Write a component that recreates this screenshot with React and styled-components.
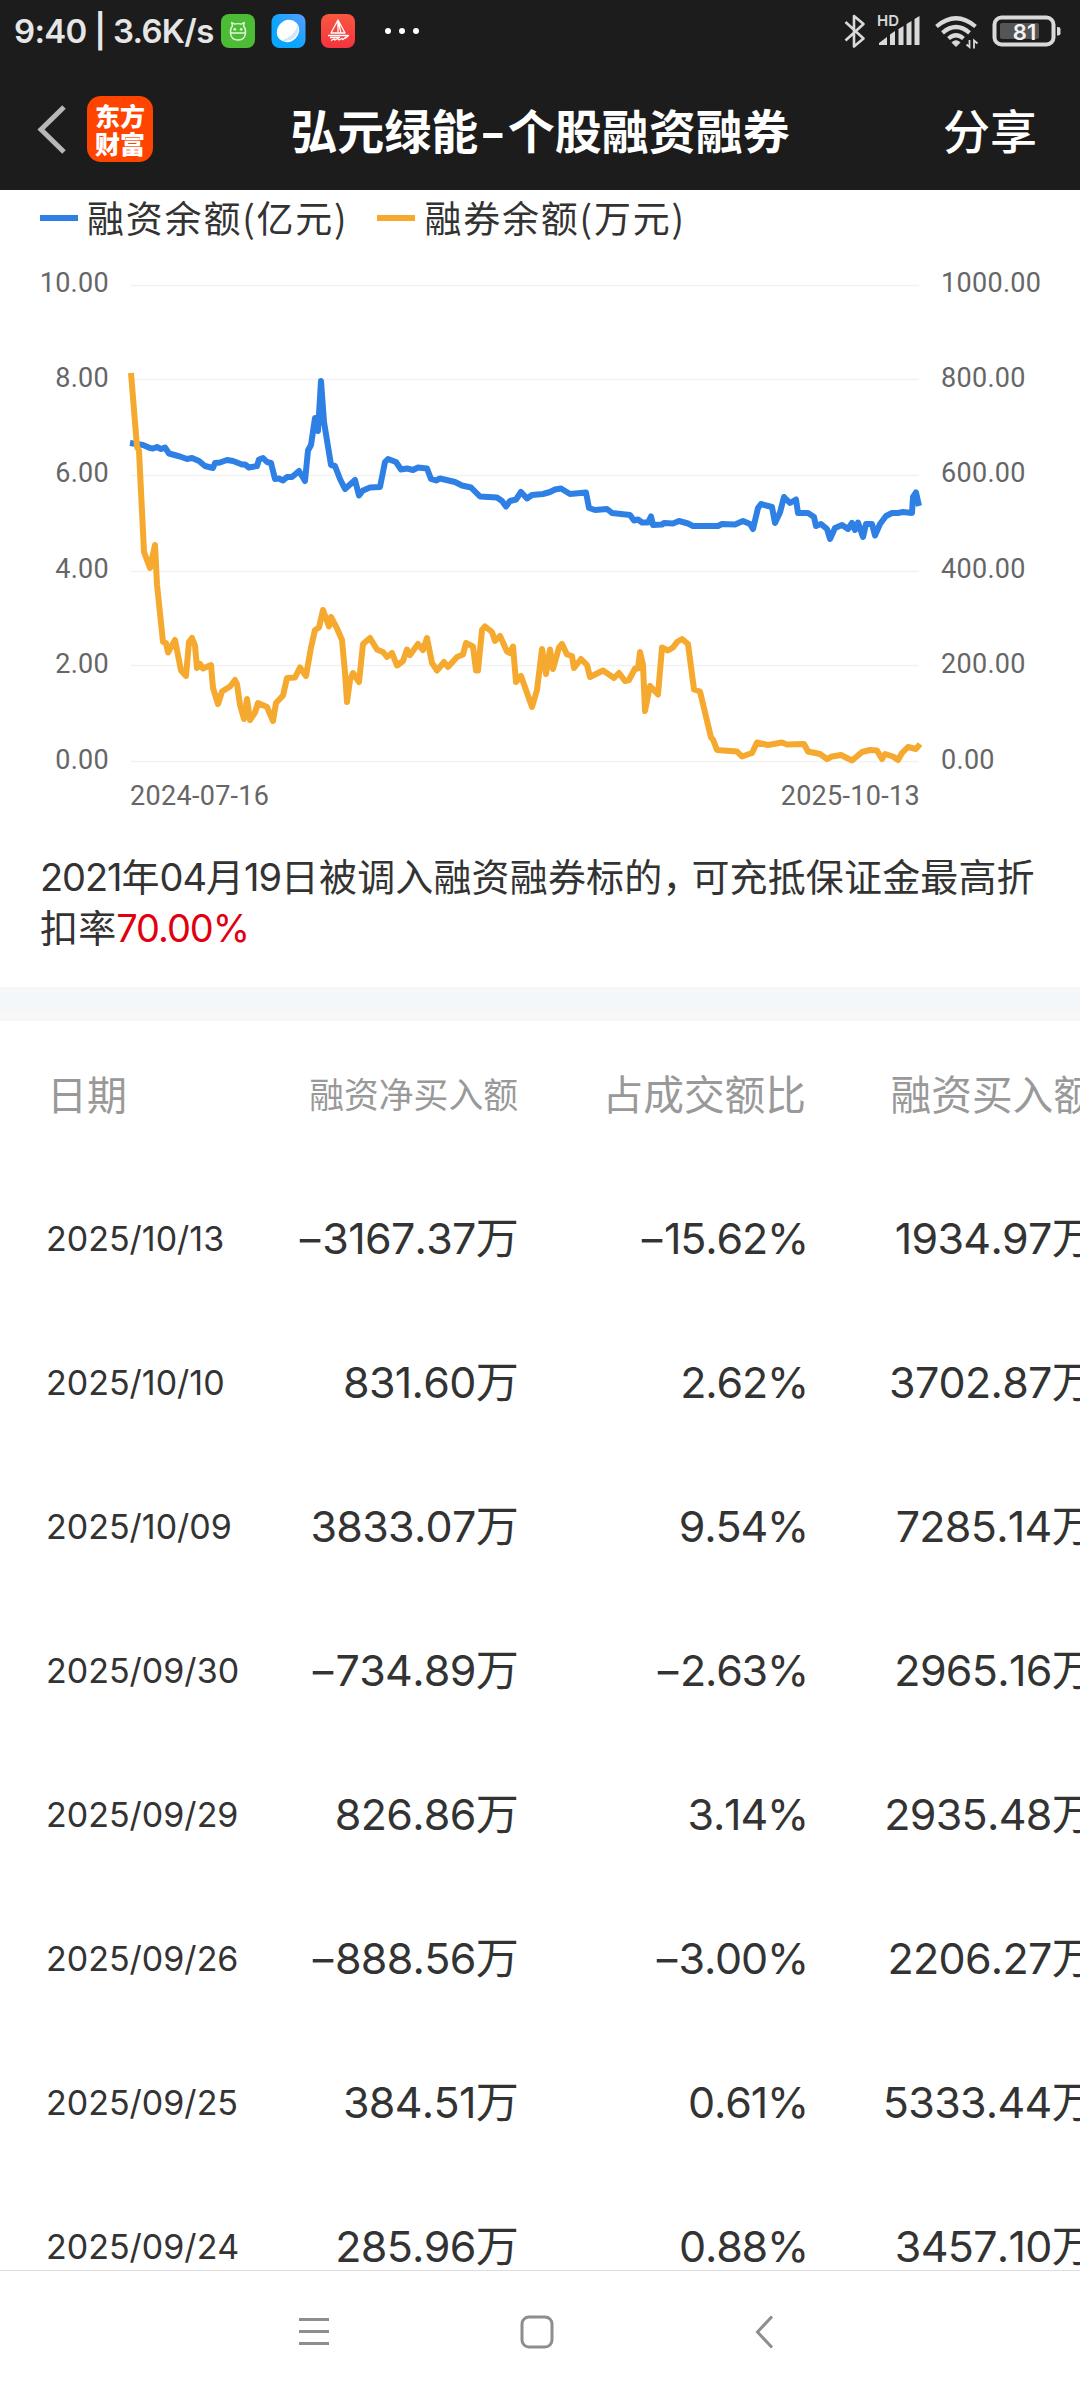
import React from 'react';
import styled, { createGlobalStyle } from 'styled-components';

const CJK = '"Noto Sans CJK SC", sans-serif';
const UI = `Inter, ${CJK}`;

const GlobalStyle = createGlobalStyle`
  * {
    box-sizing: border-box;
  }
  body {
    margin: 0;
    background: #fff;
  }
`;

const Screen = styled.div`
  display: flex;
  flex-direction: column;
  width: 1080px;
  height: 2400px;
  overflow: hidden;
  background: #fff;
  color: #333;
  font-family: ${UI};
`;

const Top = styled.header`
  height: 190px;
  flex: none;
  background: #1c1c1c;
  color: #fff;
`;

const StatusBar = styled.div`
  display: flex;
  align-items: center;
  justify-content: space-between;
  height: 62px;
  padding: 0 19px 0 14px;
`;

const StatusGroup = styled.div`
  display: flex;
  align-items: center;
`;

const Clock = styled.span`
  width: 207px;
  font-size: 33px;
  font-weight: 600;
  line-height: 62px;
  letter-spacing: -0.7px;
  white-space: pre;
  color: #e6e6e6;
`;

const NavBar = styled.nav`
  display: grid;
  grid-template-columns: 290px 1fr 290px;
  align-items: center;
  height: 128px;
  padding-top: 6px;
`;

const NavLeft = styled.div`
  display: flex;
  align-items: center;
  gap: 20px;
  padding-left: 36px;
`;

const Logo = styled.div`
  display: grid;
  grid-template-columns: 25px 25px;
  grid-auto-rows: 28px;
  place-content: center;
  place-items: center;
  width: 66px;
  height: 66px;
  border-radius: 14px;
  background: #ff4400;
  font-family: ${CJK};
  font-size: 25px;
  font-weight: 900;
  line-height: 28px;
`;

const Title = styled.h1`
  margin: 0;
  font-family: ${CJK};
  font-size: 47px;
  font-weight: 700;
  line-height: 68px;
  text-align: center;
  white-space: nowrap;
`;

// The hyphen is drawn as wide as a digit
const Dash = styled.span`
  display: inline-block;
  margin: 0 ${props => props.$gap || '3px'};
  transform: scaleX(1.5);
`;

const Share = styled.span`
  padding-right: 43px;
  font-family: ${CJK};
  font-size: 47px;
  font-weight: 500;
  line-height: 68px;
  text-align: right;
`;

const Legend = styled.div`
  display: flex;
  align-items: center;
  height: 54px;
  padding-left: 40px;
  gap: 29px;
`;

const LegendItem = styled.div`
  display: flex;
  align-items: center;
  gap: 9px;
  font-family: ${CJK};
  font-size: 37px;
  line-height: 54px;
  letter-spacing: 1.8px;

  &::before {
    content: '';
    width: 38px;
    height: 6px;
    margin-top: 2px;
    background: ${props => props.$color};
  }
`;

const ChartSvg = styled.svg`
  display: block;
  flex: none;

  text {
    font-family: Roboto, sans-serif;
    font-size: 27px;
    letter-spacing: 0.3px;
    fill: #666;
  }
`;

const Note = styled.p`
  flex: none;
  height: 147px;
  margin: 0;
  padding: 12px 0 0 40px;
  font-size: 38px;
  line-height: 51px;
  letter-spacing: 0.15px;
  white-space: nowrap;
`;

const Figure = styled.span`
  letter-spacing: -1.1px;
  color: ${props => (props.$red ? '#e1000f' : 'inherit')};
`;

const Comma = styled.span`
  letter-spacing: -9px;
`;

const Divider = styled.div`
  flex: none;
  height: 34px;
  background: #f4f7fa;
  border: solid #f7f7f7;
  border-width: 5px 0 10px;
`;

const Table = styled.main`
  flex: 1;
  min-height: 0;
  overflow: hidden;
`;

const Row = styled.div`
  display: grid;
  grid-template-columns: 230px repeat(3, 288px);
  align-items: center;
  width: 1094px;
  height: 144px;
`;

const HeadCell = styled.span`
  padding-left: ${props => (props.$first ? '47px' : '0')};
  font-family: ${CJK};
  font-size: ${props => (props.$small ? '34.8px' : props.$first ? '40px' : '40.7px')};
  line-height: 56px;
  color: #999;
  text-align: ${props => (props.$first ? 'left' : 'right')};
  white-space: nowrap;
`;

const DateCell = styled.span`
  padding: 3px 0 0 46px;
  font-size: 34px;
  font-kerning: none;
  line-height: 56px;
  white-space: nowrap;
`;

const Cell = styled.span`
  padding-top: 2px;
  margin-right: ${props => (props.$percent ? '-2px' : '0')};
  font-size: 43px;
  font-kerning: none;
  line-height: 56px;
  letter-spacing: ${props => (props.$percent ? '-1.2px' : '-0.7px')};
  text-align: right;
  white-space: nowrap;
`;

const SystemNav = styled.footer`
  display: flex;
  flex: none;
  align-items: center;
  height: 130px;
  padding: 0 0 7px 297px;
  border-top: 1px solid #dedede;
  background: #fff;
`;

const BLUE = '#2f80e4';
const ORANGE = '#f5a92f';

// Points are in screen space, the chart's viewBox starts at y = 244
const BALANCE = `130,443 143,445 150,448 153,448.5 157,447 161,449 165,447.5 169,453.5 180,456.5 187,459
  192,458 199,461 205,466 213,468 215,463 220,462.5 227,460 233,461 242,464.5 245,464.5 249,467.5 257,466
  259,459.5 263,458 267,462 271,463 275,479 279,478.5 283,480.5 287,477 292,477 299,471 305,481 308,450.5
  311,445 315,418 318,431 321,381 324,422 331,465 335,466 340,479 345,489 355,480 359,495.5 363,490.5
  370,487.5 380,487 382,477 385,462 388,459 396,462 401,469.5 407,468.5 413,470 418,467.5 427,468.5
  431,479 436,480.5 440,478.5 455,482 462,485.5 471,487.5 480,496.5 497,497.5 502,501 506,506.5 510,501
  516,499.5 521,492 527,498.5 532,495 543,494 550,492 555,489.5 561,488.5 570,494 586,492.5 589,508
  595,510 607,509 612,513 630,515 634,520.5 638,519.5 642,522.5 648,522.5 651,516.5 653,525 662,524.5
  664,523 673,523.5 679,521 688,523.5 693,526 718,526 722,524 735,524.5 743,521 750,524 753,529 758,508
  761,504 772,507 775,523 780,512.5 784,497 790,503 796,499.5 798,513 808,513 814,517 816,526 821,524
  827,529 830,539 835,528 842,525 848,529 852,523 855,530 858,522.5 863,537 866,524 872,524 875,535.5
  880,524 886,516 892,513 898,513 903,512 912,513 913,497 916,492.5 919,506`;

const LENDING = `131,373 137,447 139,450.5 144,552 150,568 155,545 157,584.5 163,642 166,643 168,652.5
  175,640 181,670.5 186,676 189,642 192,638 195,645.5 197,668 200,664 203,668.5 211,665 213,688 218,704
  222,691.5 230,686.5 235,680 237,684 240,705 244,719 247,699 250,720 255,712.5 258,703 267,707 273,721
  276,703 283,695.5 287,678 295,677.5 300,667.5 306,676 311,647.5 315,630 319,627.5 323,610 329,626.5
  331,617 337,628.5 342,640 345,672.5 347,702 350,680 353,673 359,682 363,644 370,638 377,649.5 383,652
  387,657 392,653 397,665.5 403,661 407,649.5 410,655 418,644 423,650 427,638 432,663 437,670.5 444,662
  448,667 457,657 463,654.5 466,643 473,646.5 476,670.5 478,670.5 482,630 485,626.5 492,632 495,641
  500,636 507,651.5 510,653 513,646.5 516,682 521,676 532,707 537,690 542,649 546,674 550,649.5 553,669
  559,647.5 562,644 567,654.5 572,656 574,668 581,659 587,665 590,677 603,670.5 614,678 619,673 625,681
  629,680 635,668.5 638,668.5 640,652 643,665 645,711 650,686 658,694.5 662,647.5 668,650.5 673,647.5
  677,642 682,639 688,644 694,689.5 700,691.5 711,737.5 713,739.5 717,750 737,751.5 742,756.5 752,753
  757,742.5 768,745 782,742.5 787,744.5 804,744 808,751.5 820,754 827,759 832,756.5 841,755 852,760.5
  862,752 870,750 877,750.5 882,759 885,754 893,756.5 898,760 902,753 908,747 916,749 920,744`;

const TICKS = [
  { y: 285.5, left: '10.00', right: '1000.00' },
  { y: 379.5, left: '8.00', right: '800.00' },
  { y: 475.5, left: '6.00', right: '600.00' },
  { y: 571.5, left: '4.00', right: '400.00' },
  { y: 665.5, left: '2.00', right: '200.00' },
  { y: 761.5, left: '0.00', right: '0.00' },
];

const ROWS = [
  ['2025/10/13', '-3167.37万', '-15.62%', '1934.97万'],
  ['2025/10/10', '831.60万', '2.62%', '3702.87万'],
  ['2025/10/09', '3833.07万', '9.54%', '7285.14万'],
  ['2025/09/30', '-734.89万', '-2.63%', '2965.16万'],
  ['2025/09/29', '826.86万', '3.14%', '2935.48万'],
  ['2025/09/26', '-888.56万', '-3.00%', '2206.27万'],
  ['2025/09/25', '384.51万', '0.61%', '5333.44万'],
  ['2025/09/24', '285.96万', '0.88%', '3457.10万'],
];

function AppIcons() {
  return (
    <svg width="200" height="62" viewBox="221 0 200 62" fill="none">
      <defs>
        <linearGradient id="blueApp" x1="0" y1="1" x2="1" y2="0">
          <stop offset="0.4" stopColor="#0aa5ff" />
          <stop offset="1" stopColor="#5b9dff" />
        </linearGradient>
        <linearGradient id="redApp" x1="0" y1="0" x2="0" y2="1">
          <stop offset="0" stopColor="#f9583f" />
          <stop offset="1" stopColor="#f5333f" />
        </linearGradient>
      </defs>
      <rect x="221" y="14" width="34" height="34" rx="8" fill="#4cbb35" />
      <g stroke="#e2f7da" strokeWidth="1.4" strokeLinejoin="round">
        <path d="M230.500 33q-.5-4.500 2-7l-.8-3.500 3 1.600q3-1 6.600 0l3-1.600-.8 3.500q2.500 2.500 2 7z" />
        <path d="M230.500 33q.5 7 7.500 7t7.500-7" />
      </g>
      <circle cx="234.800" cy="29.300" r="1.400" fill="#e2f7da" />
      <circle cx="241.200" cy="29.300" r="1.400" fill="#e2f7da" />
      <rect x="271.500" y="14" width="34" height="34" rx="8" fill="url(#blueApp)" />
      <ellipse cx="288" cy="31" rx="11.800" ry="10.500" transform="rotate(-45 288 31)" fill="#fff" />
      <path d="M281.500 40.500q13-4 16.500-16 1.500 9-4 13.500-6 4.500-12.500 2.500z" fill="#d3e6fa" />
      <rect x="321" y="14" width="34" height="34" rx="8" fill="url(#redApp)" />
      <g stroke="#fff" strokeWidth="1.300" strokeLinejoin="round">
        <path d="M338 20l-7 13h14zM338 20v13M338 20l3 13" />
        <path d="M328 35.500h20.500l-3.500 3M330 37.500h10M331 40.500l3-1.500 1 1 3-1.500 1 1.500 3-1.500 1 1 3-2.500" />
      </g>
      <g fill="#fff">
        <circle cx="388" cy="31" r="3" />
        <circle cx="402" cy="31" r="3" />
        <circle cx="416" cy="31" r="3" />
      </g>
    </svg>
  );
}

function SystemIcons() {
  return (
    <svg width="219" height="62" viewBox="842 0 219 62" fill="none">
      <path
        d="M845.500 22l18 16.500-9.500 8V16l9.500 8-18 16.500"
        stroke="#d9d9d9"
        strokeWidth="2.600"
        strokeLinejoin="round"
      />
      <text x="877" y="26" fontFamily="Inter, sans-serif" fontSize="15" fontWeight="600" fill="#d9d9d9">
        HD
      </text>
      <g fill="#d9d9d9">
        <path d="M879 45v-2l8-6v8z" />
        <path d="M890 45V34.500l5-3.500v14z" />
        <path d="M898.500 45V29l5-3v19z" />
        <path d="M906.500 45V24l5-3v24z" />
        <path d="M914.500 45V19l5-3v29z" />
      </g>
      <g stroke="#d9d9d9" strokeWidth="4.200">
        <path d="M936.500 26.500q19.500-16.500 39 0" />
        <path d="M942.500 32.800q13.500-11.500 27 0" />
        <path d="M948.500 38.500q7.500-6.500 15 0" />
      </g>
      <path d="M956 46.500l-4-4q4-3.500 8 0z" fill="#d9d9d9" stroke="#d9d9d9" strokeLinejoin="round" />
      <path d="M966.500 44.500l3 2.500V40M977.500 43.500l-3.500-3V48.500" stroke="#d9d9d9" strokeWidth="1.800" />
      <rect x="994.500" y="17.500" width="59" height="27" rx="7" stroke="#d9d9d9" strokeWidth="4" />
      <rect x="1000" y="23" width="39" height="16" rx="2" fill="#555" />
      <path d="M1057 27h1q2.500 0 2.500 2v4.500q0 2-2.500 2h-1z" fill="#d9d9d9" />
      <text
        x="1024.500"
        y="39.500"
        textAnchor="middle"
        fontFamily="Inter, sans-serif"
        fontSize="22"
        fontWeight="600"
        fill="#f2f2f2"
      >
        81
      </text>
    </svg>
  );
}

function Chart() {
  return (
    <ChartSvg width="1080" height="596" viewBox="0 244 1080 596" fill="none">
      {TICKS.map((tick, i) => (
        <g key={tick.right}>
          <path d={`M131 ${tick.y}H919`} stroke="#f1f1f1" strokeWidth="1.500" />
          <text x="109" y={291.5 + i * 95.4} textAnchor="end">{tick.left}</text>
          <text x="941" y={291.5 + i * 95.4}>{tick.right}</text>
        </g>
      ))}
      <text x="130" y="804.500">2024-07-16</text>
      <text x="920" y="804.500" textAnchor="end">2025-10-13</text>
      <polyline points={BALANCE} stroke={BLUE} strokeWidth="6" strokeLinejoin="round" />
      <polyline points={LENDING} stroke={ORANGE} strokeWidth="6" strokeLinejoin="round" />
    </ChartSvg>
  );
}

function Value({ text, percent }) {
  const negative = text.startsWith('-');
  return (
    <Cell $percent={percent}>
      {negative && <Dash>-</Dash>}
      {negative ? text.slice(1) : text}
    </Cell>
  );
}

export default function App() {
  return (
    <Screen>
      <GlobalStyle />
      <Top>
        <StatusBar>
          <StatusGroup>
            <Clock>9:40 | 3.6K/s</Clock>
            <AppIcons />
          </StatusGroup>
          <SystemIcons />
        </StatusBar>
        <NavBar>
          <NavLeft>
            <svg width="31" height="52" viewBox="36 104 31 52" fill="none">
              <path d="M64 108L41 130.500 64 153" stroke="#b8b8b8" strokeWidth="5" />
            </svg>
            <Logo>
              <span>东</span>
              <span>方</span>
              <span>财</span>
              <span>富</span>
            </Logo>
          </NavLeft>
          <Title>
            弘元绿能<Dash $gap="6px">-</Dash>个股融资融券
          </Title>
          <Share>分享</Share>
        </NavBar>
      </Top>

      <Legend>
        <LegendItem $color={BLUE}>融资余额(亿元)</LegendItem>
        <LegendItem $color={ORANGE}>融券余额(万元)</LegendItem>
      </Legend>
      <Chart />

      <Note>
        <Figure>2021</Figure>年<Figure>04</Figure>月<Figure>19</Figure>
        日被调入融资融券标的<Comma>，</Comma>可充抵保证金最高折
        <br />
        扣率<Figure $red>70.00%</Figure>
      </Note>
      <Divider />

      <Table>
        <Row>
          <HeadCell $first>日期</HeadCell>
          <HeadCell $small>融资净买入额</HeadCell>
          <HeadCell>占成交额比</HeadCell>
          <HeadCell>融资买入额</HeadCell>
        </Row>
        {ROWS.map(([date, net, ratio, buy]) => (
          <Row key={date}>
            <DateCell>{date}</DateCell>
            <Value text={net} />
            <Value text={ratio} percent />
            <Value text={buy} />
          </Row>
        ))}
      </Table>

      <SystemNav>
        <svg width="480" height="40" viewBox="297 2312 480 40" fill="none" stroke="#8e8e8e" strokeWidth="3">
          <path d="M299 2319.500h30M299 2331.500h30M299 2343.500h30" />
          <rect x="522" y="2317" width="30" height="30" rx="7" />
          <path d="M772 2316.500L757.500 2332l14.500 15.500" />
        </svg>
      </SystemNav>
    </Screen>
  );
}
